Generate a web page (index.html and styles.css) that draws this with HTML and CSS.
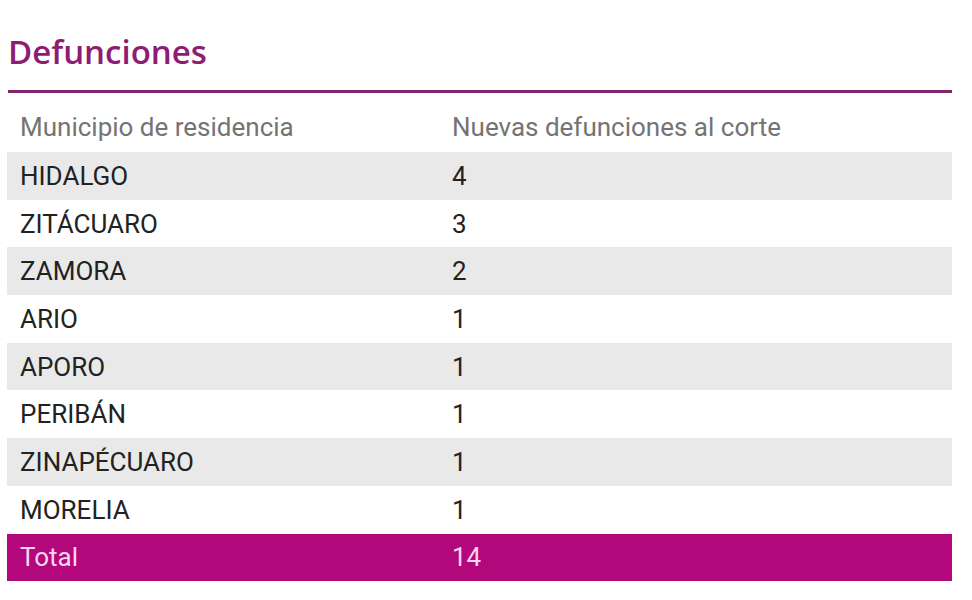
FILE: index.html
```html
<!DOCTYPE html>
<html lang="es">
<head>
<meta charset="utf-8">
<title>Defunciones</title>
<link rel="stylesheet" href="styles.css">
</head>
<body>
<section class="panel">
  <h2 class="title">Defunciones</h2>
  <table class="deaths">
    <thead>
      <tr><th>Municipio de residencia</th><th>Nuevas defunciones al corte</th></tr>
    </thead>
    <tbody>
      <tr><td>HIDALGO</td><td>4</td></tr>
      <tr><td>ZITÁCUARO</td><td>3</td></tr>
      <tr><td>ZAMORA</td><td>2</td></tr>
      <tr><td>ARIO</td><td>1</td></tr>
      <tr><td>APORO</td><td>1</td></tr>
      <tr><td>PERIBÁN</td><td>1</td></tr>
      <tr><td>ZINAPÉCUARO</td><td>1</td></tr>
      <tr><td>MORELIA</td><td>1</td></tr>
    </tbody>
    <tfoot>
      <tr><td>Total</td><td>14</td></tr>
    </tfoot>
  </table>
</section>
</body>
</html>
```
FILE: styles.css
```css
html, body {
  margin: 0;
  padding: 0;
  background: #ffffff;
}
.panel {
  width: 945px;
  margin-left: 7px;
}
.title {
  margin: 30px 0 0 1px;
  font-family: "Open Sans", sans-serif;
  font-weight: 600;
  font-size: 33px;
  line-height: 44px;
  color: #8e1c72;
  padding-bottom: 16px;
  border-bottom: 3px solid #80266c;
}
.deaths {
  width: 100%;
  border-collapse: collapse;
  font-family: Roboto, sans-serif;
  font-size: 26px;
}
.deaths th {
  text-align: left;
  font-weight: 400;
  color: #747474;
  padding: 19px 13px 10px;
  line-height: 30px;
}
.deaths th:first-child,
.deaths td:first-child {
  width: 406px;
}
.deaths td {
  height: 47.7px;
  box-sizing: border-box;
  padding: 0 13px;
  color: #222222;
  line-height: 30px;
  vertical-align: middle;
}
.deaths tbody tr:nth-child(odd) {
  background: #e9e9e9;
}
.deaths tfoot tr {
  background: #b3087b;
}
.deaths tfoot td {
  color: #f9d6f0;
}
```
